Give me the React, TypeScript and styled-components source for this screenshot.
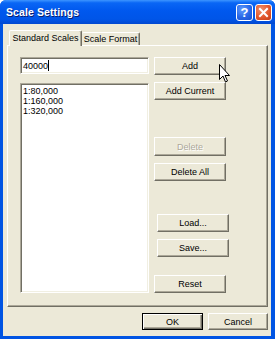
import React from "react";
import styled, { createGlobalStyle, css } from "styled-components";

const Global = createGlobalStyle`
  html, body { margin: 0; padding: 0; background: #ffffff; }
  body { font-family: "Liberation Sans", Arial, sans-serif; }
  * { box-sizing: border-box; }
`;

const Window = styled.div`
  position: relative;
  width: 275px;
  height: 339px;
  display: flex;
  flex-direction: column;
  border-radius: 6px 6px 0 0;
  overflow: hidden;
  background: #0054e3;
`;

const TitleBar = styled.div`
  height: 24px;
  flex: none;
  display: flex;
  align-items: center;
  padding: 0 3px 0 6px;
  background: linear-gradient(
    #3d95ff 0%,
    #0a66f5 12%,
    #0058ee 45%,
    #0055e8 80%,
    #0148d0 100%
  );
`;

const Title = styled.div`
  flex: 1;
  color: #ffffff;
  font-family: "Liberation Sans", Arial, sans-serif;
  font-weight: bold;
  font-size: 10.5px;
  text-shadow: 1px 1px 0 #0a1e6e;
  letter-spacing: 0.1px;
`;

const CapButtons = styled.div`
  display: flex;
  gap: 2px;
`;

const CapButton = styled.div<{ $kind: "help" | "close" }>`
  width: 17px;
  height: 17px;
  border: 1px solid #ffffff;
  border-radius: 3px;
  display: flex;
  align-items: center;
  justify-content: center;
  ${(p) =>
    p.$kind === "help"
      ? css`
          background: radial-gradient(circle at 35% 30%, #5e9bff 0%, #2867e6 55%, #1a4fcf 100%);
        `
      : css`
          background: radial-gradient(circle at 35% 30%, #f0916e 0%, #e2572d 55%, #c43c17 100%);
        `}
`;

const HelpMark = styled.span`
  color: #ffffff;
  font-family: "Liberation Sans", Arial, sans-serif;
  font-weight: bold;
  font-size: 13px;
  line-height: 1;
`;

const Body = styled.div`
  flex: 1;
  margin: 0 4px 3px 3px;
  background: #ece9d8;
  display: flex;
  flex-direction: column;
  padding: 6px 3px 6px 4px;
  gap: 6px;
`;

const TabArea = styled.div`
  flex: 1;
  display: flex;
  flex-direction: column;
`;

const TabRow = styled.div`
  height: 15px;
  display: flex;
  align-items: flex-end;
  padding-left: 2px;
  position: relative;
  z-index: 1;
`;

const Tab = styled.div<{ $active?: boolean; $w: number }>`
  width: ${(p) => p.$w}px;
  background: #ece9d8;
  font-size: 9px;
  color: #000;
  display: flex;
  align-items: center;
  justify-content: center;
  border-radius: 2px 2px 0 0;
  border-top: 1px solid #ffffff;
  border-left: 1px solid #ffffff;
  border-right: 1px solid #716f64;
  box-shadow: inset -1px 0 #aca899;
  ${(p) =>
    p.$active
      ? css`
          height: 16px;
          margin-bottom: -1px;
          padding-bottom: 1px;
        `
      : css`
          height: 13px;
          border-left: none;
        `}
`;

const Panel = styled.div`
  flex: 1;
  display: flex;
  gap: 5px;
  padding: 11px 0 13px 12px;
  border: 1px solid;
  border-color: #ffffff #716f64 #716f64 #ffffff;
  box-shadow: inset -1px -1px #aca899;
`;

const LeftCol = styled.div`
  width: 129px;
  display: flex;
  flex-direction: column;
  gap: 9px;
`;

const sunken = css`
  background: #ffffff;
  border: 1px solid;
  border-color: #aca899 #ffffff #ffffff #aca899;
  box-shadow: inset 1px 1px #716f64, inset -1px -1px #f1efe2;
`;

const TextBox = styled.div`
  ${sunken};
  height: 17px;
  display: flex;
  align-items: center;
  padding-left: 2px;
  font-size: 9px;
  color: #000;
`;

const Caret = styled.span`
  display: inline-block;
  width: 1px;
  height: 11px;
  background: #000;
  margin-left: 0px;
`;

const ListBox = styled.div`
  ${sunken};
  flex: 1;
  padding: 2px 0 0 2px;
  display: flex;
  flex-direction: column;
`;

const ListItem = styled.div`
  font-size: 9px;
  height: 10px;
  line-height: 10px;
  color: #000;
`;

const RightCol = styled.div`
  display: flex;
  flex-direction: column;
  align-items: flex-start;
`;

const Button = styled.div<{ $top?: number; $shift?: number; $w?: number; $h?: number; $disabled?: boolean; $default?: boolean }>`
  width: ${(p) => p.$w ?? 72}px;
  height: ${(p) => p.$h ?? 18}px;
  margin-top: ${(p) => p.$top ?? 0}px;
  margin-left: ${(p) => p.$shift ?? 0}px;
  background: #ece9d8;
  display: flex;
  align-items: center;
  justify-content: center;
  font-size: 9px;
  color: ${(p) => (p.$disabled ? "#aca899" : "#000")};
  text-shadow: ${(p) => (p.$disabled ? "1px 1px 0 #ffffff" : "none")};
  ${(p) =>
    p.$default
      ? css`
          border: 1px solid #000000;
          box-shadow: inset 1px 1px #ffffff, inset -1px -1px #716f64, inset -2px -2px #aca899;
        `
      : css`
          border: 1px solid;
          border-color: #ffffff #716f64 #716f64 #ffffff;
          box-shadow: inset -1px -1px #aca899;
        `}
`;

const Footer = styled.div`
  height: 17px;
  display: flex;
  justify-content: flex-end;
  gap: 5px;
  padding-right: 0px;
`;

const Cursor = styled.svg`
  position: absolute;
  left: 219px;
  top: 64px;
`;

export default function App() {
  return (
    <>
      <Global />
      <Window>
        <TitleBar>
          <Title>Scale Settings</Title>
          <CapButtons>
            <CapButton $kind="help">
              <HelpMark>?</HelpMark>
            </CapButton>
            <CapButton $kind="close">
              <svg width="11" height="11" viewBox="0 0 11 11">
                <path d="M2 2 L9 9 M9 2 L2 9" stroke="#fff" strokeWidth="2" strokeLinecap="square" />
              </svg>
            </CapButton>
          </CapButtons>
        </TitleBar>
        <Body>
          <TabArea>
            <TabRow>
              <Tab $active $w={73}>Standard Scales</Tab>
              <Tab $w={58}>Scale Format</Tab>
            </TabRow>
            <Panel>
              <LeftCol>
                <TextBox>
                  40000
                  <Caret />
                </TextBox>
                <ListBox>
                  <ListItem>1:80,000</ListItem>
                  <ListItem>1:160,000</ListItem>
                  <ListItem>1:320,000</ListItem>
                </ListBox>
              </LeftCol>
              <RightCol>
                <Button>Add</Button>
                <Button $top={7}>Add Current</Button>
                <Button $top={37} $h={19} $disabled>Delete</Button>
                <Button $top={7}>Delete All</Button>
                <Button $top={33} $shift={3}>Load...</Button>
                <Button $top={7} $shift={3}>Save...</Button>
                <Button $top={18}>Reset</Button>
              </RightCol>
            </Panel>
          </TabArea>
          <Footer>
            <Button $w={61} $h={17} $default>OK</Button>
            <Button $w={60} $h={17}>Cancel</Button>
          </Footer>
        </Body>
        <Cursor width="12" height="20" viewBox="0 0 12 20">
          <path d="M0.5 0.5 L0.5 15.5 L4 12 L6.5 18 L8.5 17 L6 11.5 L10.5 11.5 Z" fill="#fff" stroke="#000" strokeWidth="1" />
        </Cursor>
      </Window>
    </>
  );
}
